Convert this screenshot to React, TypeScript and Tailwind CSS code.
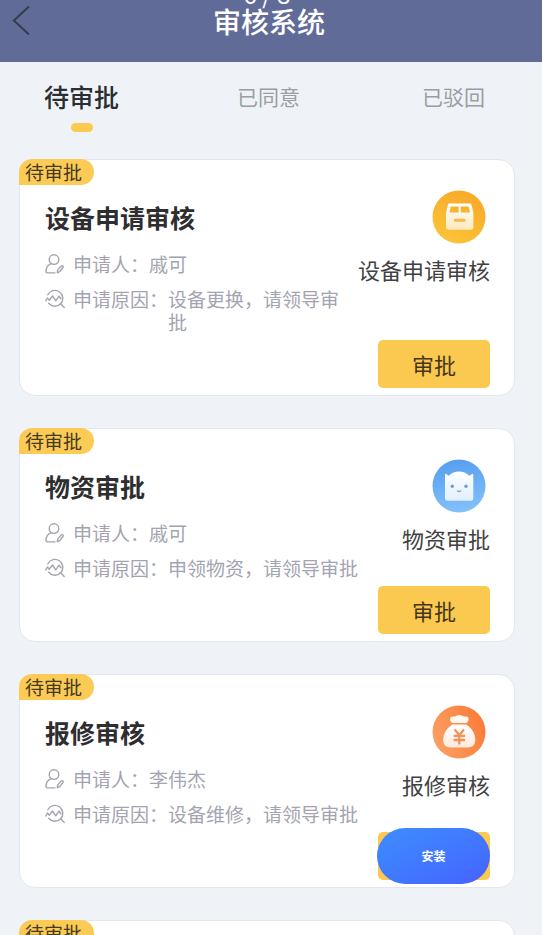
import React from "react";

type Kind = "device" | "supply" | "repair";

interface Request {
  id: number;
  kind: Kind;
  title: string;
  applicant: string;
  reason: string;
  install?: boolean;
}

const requests: Request[] = [
  { id: 1, kind: "device", title: "设备申请审核", applicant: "戚可", reason: "设备更换，请领导审批" },
  { id: 2, kind: "supply", title: "物资审批", applicant: "戚可", reason: "申领物资，请领导审批" },
  { id: 3, kind: "repair", title: "报修审核", applicant: "李伟杰", reason: "设备维修，请领导审批", install: true },
  { id: 4, kind: "device", title: "设备申请审核", applicant: "李伟杰", reason: "设备更换，请领导审批" },
];

function UserIcon() {
  return (
    <svg className="mt-0.5 h-5 w-5 shrink-0" viewBox="0 0 20 20" fill="none" stroke="#a3a4b1" strokeWidth="1.4" strokeLinecap="round" strokeLinejoin="round" aria-hidden="true">
      <circle cx="9" cy="5.6" r="4.8" />
      <path d="M6 9.600C3 11 1 14 1 17.400q0 1.500 1.500 1.500H10" />
      <path d="M12.300 18.800l.4-2.900 3.600-3.900c1.200-.9 2.500.3 1.700 1.500l-3.400 4.200z" />
    </svg>
  );
}

function ReasonIcon() {
  return (
    <svg className="mt-0.5 h-5 w-5 shrink-0" viewBox="0 0 20 20" fill="none" stroke="#a3a4b1" strokeWidth="1.4" strokeLinecap="round" strokeLinejoin="round" aria-hidden="true">
      <path d="M2.800 5.800a7.900 7.900 0 1 1 .9 8.400" />
      <path d="M.8 12l1.600-3 1.900 2.200 3.200-4.200 3.300 4.800 3.200-4.600 2 2.600" />
      <path d="M15.600 14.800l3.600 3.800" />
    </svg>
  );
}

function KindIcon({ kind }: { kind: Kind }) {
  if (kind === "device") {
    return (
      <svg className="h-[54px] w-[54px]" viewBox="0 0 54 54" aria-hidden="true">
        <defs>
          <linearGradient id="deviceBg" x1="0.8" y1="0" x2="0.3" y2="1">
            <stop offset="0" stopColor="#f8a828" />
            <stop offset="1" stopColor="#fac438" />
          </linearGradient>
          <linearGradient id="deviceFg" x1="0" y1="0" x2="0" y2="1">
            <stop offset="0" stopColor="#ffffff" />
            <stop offset="1" stopColor="#fee9bd" />
          </linearGradient>
        </defs>
        <circle cx="27" cy="27" r="26.5" fill="url(#deviceBg)" />
        <path fillRule="evenodd" fill="url(#deviceFg)" d="M17.500 13.500h20.400q1.300 0 1.600 1.200l1.900 8v14.600q0 2.400-2.400 2.400H16.400q-2.400 0-2.400-2.400V22.700l1.900-8q.3-1.200 1.600-1.200zM18.800 16.400l-1.400 6.200h9.200v-6.200zM28.800 16.400v6.200h9.200l-1.400-6.200z" />
        <rect x="22" y="28.800" width="11.500" height="3" rx="0.8" fill="#f8b84c" />
      </svg>
    );
  }
  if (kind === "supply") {
    return (
      <svg className="h-[54px] w-[54px]" viewBox="0 0 54 54" aria-hidden="true">
        <defs>
          <linearGradient id="supplyBg" x1="0.4" y1="0" x2="0.6" y2="1">
            <stop offset="0" stopColor="#569ff0" />
            <stop offset="1" stopColor="#83c1fa" />
          </linearGradient>
          <linearGradient id="supplyFg" x1="0" y1="0" x2="0" y2="1">
            <stop offset="0" stopColor="#ffffff" />
            <stop offset="1" stopColor="#e0effe" />
          </linearGradient>
        </defs>
        <circle cx="27" cy="27" r="26.5" fill="url(#supplyBg)" />
        <path fill="url(#supplyFg)" d="M13 15.500q.2-1 1.200-.5l2.600 1.800c5-5.800 15.400-5.800 20.400 0l2.900-1.800q1-.5 1.200.5v24q0 2.300-2.300 2.300H15.300q-2.300 0-2.300-2.300z" />
        <circle cx="20.300" cy="27.300" r="1.700" fill="#6a9fdf" />
        <circle cx="34" cy="27.300" r="1.700" fill="#6a9fdf" />
        <path d="M25.600 32q1.500 1 3 0" fill="none" stroke="#7ea6dc" strokeWidth="1.500" strokeLinecap="round" />
      </svg>
    );
  }
  return (
    <svg className="h-[54px] w-[54px]" viewBox="0 0 54 54" aria-hidden="true">
      <defs>
        <linearGradient id="repairBg" x1="1" y1="0.3" x2="0" y2="0.7">
          <stop offset="0" stopColor="#fb7b37" />
          <stop offset="1" stopColor="#faa164" />
        </linearGradient>
        <linearGradient id="repairFg" x1="0" y1="0" x2="0" y2="1">
          <stop offset="0" stopColor="#ffffff" />
          <stop offset="1" stopColor="#ffeadb" />
        </linearGradient>
      </defs>
      <circle cx="27" cy="27" r="26.5" fill="url(#repairBg)" />
      <path fill="#fff8f1" d="M20.500 11.600h2.800q1.200-1.500 4-1.500t4 1.500h2.700q2.700.3 2.700 2.800 0 1.500-1.400 2.700l-1 .9H20.300l-1-.9q-1.400-1.200-1.400-2.700 0-2.500 2.600-2.800z" />
      <path fill="url(#repairFg)" d="M20.500 19.600h13.600c5 3.200 9.200 8.200 9.200 15.200 0 5-2.500 7.600-7 7.600H18.200c-4.500 0-7-2.600-7-7.600 0-7 4.300-12 9.300-15.200z" />
      <path d="M22.600 24.500l4.700 5.500 4.700-5.500M21.600 30.800h11.400M21.600 35h11.400M27.300 30v9.500" fill="none" stroke="#f5915a" strokeWidth="2.300" />
    </svg>
  );
}

function RequestCard({ request }: { request: Request }) {
  return (
    <article className="rounded-2xl border border-[#e3e5f1] bg-white pb-[7px]">
      <div className="-ml-px -mt-px h-[26px] w-[75px] rounded-r-[13px] rounded-tl-[13px] bg-[#fbcb55] pl-[6px] text-[19px] leading-[26px] text-[#45391f]">
        待审批
      </div>
      <div className="flex items-start justify-between pl-[25px] pr-6">
        <div className="min-w-0 flex-1 pt-[14px]">
          <h2 className="text-[25px] font-bold leading-9 text-[#2e2e30]">{request.title}</h2>
          <dl className="mt-[17px] text-[19px] leading-[23px] text-[#a3a4b1]">
            <div className="flex">
              <dt className="flex shrink-0 items-start gap-2">
                <UserIcon />
                <span>申请人：</span>
              </dt>
              <dd>{request.applicant}</dd>
            </div>
            <div className="mt-3 flex">
              <dt className="flex shrink-0 items-start gap-2">
                <ReasonIcon />
                <span>申请原因：</span>
              </dt>
              <dd className={request.kind === "device" ? "max-w-44" : "whitespace-nowrap"}>{request.reason}</dd>
            </div>
          </dl>
        </div>
        <div className="flex shrink-0 flex-col items-end pt-[5px]">
          <div className="mr-1">
            <KindIcon kind={request.kind} />
          </div>
          <p className="mt-[9px] text-[22px] leading-8 text-[#414143]">{request.title}</p>
        </div>
      </div>
      <div className="mt-[7px] flex justify-end pr-6">
        {request.install ? (
          <div className="relative h-12 w-28 rounded-[5px] bg-[#fbc94f]">
            <button type="button" className="absolute -left-px -top-1 h-14 w-[113px] rounded-full bg-linear-to-br from-[#3d8dff] to-[#4562ff] text-xs font-bold text-white">
              安装
            </button>
          </div>
        ) : (
          <button type="button" className="h-12 w-28 rounded-[5px] bg-[#fbc94f] text-[22px] text-[#453619]">
            审批
          </button>
        )}
      </div>
    </article>
  );
}

export default function App() {
  return (
    <div className="h-screen overflow-hidden bg-[#eff3f7] font-['Noto_Sans_CJK_SC',sans-serif]">
      <header className="relative flex h-[62px] items-start justify-center bg-[#606b98] pr-1 text-white">
        <button type="button" aria-label="返回" className="absolute left-3 top-1 h-8 w-5">
          <svg viewBox="0 0 20 32" className="h-8 w-5" fill="none" stroke="#353d4b" strokeWidth="2" aria-hidden="true">
            <path d="M17 2.500L1.800 16.500 17 30.500" />
          </svg>
        </button>
        <span className="absolute inset-x-0 -top-5 pr-2 text-center text-2xl leading-7">6 / 8</span>
        <h1 className="text-[28px] font-medium leading-[42px]">审核系统</h1>
      </header>
      <nav className="flex h-[97px] items-start justify-between pl-11 pr-[57px] pt-[14px] text-[21px] leading-10 text-[#9a9da1]">
        <button type="button" className="flex w-[75px] flex-col items-center text-[25px] font-medium text-[#2b2e33]">
          待审批
          <span className="mt-[7px] h-[9px] w-[22px] rounded-full bg-[#fbcb50]" />
        </button>
        <button type="button" className="pr-1">已同意</button>
        <button type="button">已驳回</button>
      </nav>
      <main className="flex flex-col gap-8 pl-[19px] pr-[27px]">
        {requests.map((request) => (
          <RequestCard key={request.id} request={request} />
        ))}
      </main>
    </div>
  );
}
